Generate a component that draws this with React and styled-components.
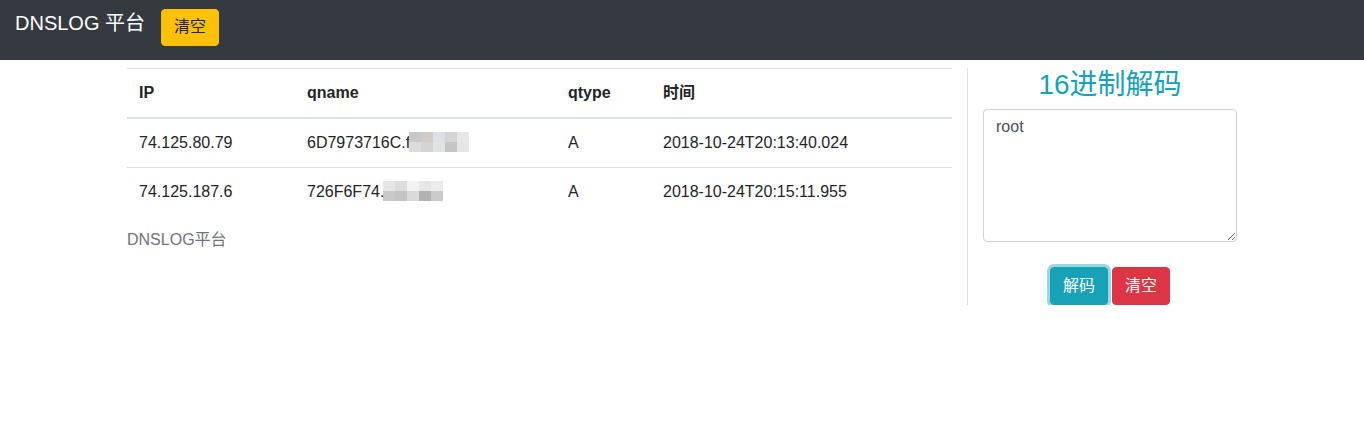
import React from 'react';
import styled, { createGlobalStyle } from 'styled-components';

const GlobalStyle = createGlobalStyle`
  * { box-sizing: border-box; }
  body {
    margin: 0;
    font-family: "Liberation Sans", "Noto Sans CJK SC", sans-serif;
    font-size: 16px;
    line-height: 1.5;
    color: #212529;
    background: #fff;
  }
`;

const Navbar = styled.nav`
  height: 60px;
  background-color: #343a40;
  display: flex;
  align-items: flex-start;
  padding: 8px 16px 0 15px;
`;

const Brand = styled.span`
  font-size: 20px;
  line-height: 30px;
  color: #fff;
  margin-right: 16px;
`;

const Button = styled.button`
  font-family: inherit;
  font-size: 16px;
  line-height: 24px;
  padding: 6px 12px;
  border-radius: 4px;
  border: 1px solid ${p => p.$bg};
  background-color: ${p => p.$bg};
  color: ${p => p.$color || '#fff'};
  cursor: pointer;
  box-shadow: ${p => (p.$focus ? '0 0 0 3px rgba(58, 176, 195, 0.5)' : 'none')};
`;

const NavButton = styled(Button)`
  margin-top: 1px;
  height: 37px;
  padding-top: 5px;
`;

const Container = styled.div`
  width: 1140px;
  margin: 0 auto;
  padding-top: 8px;
  display: grid;
  grid-template-columns: 855px 285px;
`;

const MainCol = styled.div`
  padding: 0 15px;
`;

const SideCol = styled.div`
  border-left: 1px solid #dee2e6;
  padding: 0 15px 0 15px;
  height: 237px;
  display: flex;
  flex-direction: column;
`;

const Table = styled.table`
  width: 100%;
  border-collapse: collapse;
  caption-side: bottom;
`;

const Caption = styled.caption`
  text-align: left;
  color: #6c757d;
  padding: 12px 0;
  line-height: 24px;
`;

const Th = styled.th`
  text-align: left;
  font-weight: bold;
  padding: 12px;
  line-height: 24px;
  border-top: 1px solid #dee2e6;
  border-bottom: 2px solid #dee2e6;
  width: ${p => p.$w}px;
`;

const Td = styled.td`
  padding: 12px;
  line-height: 24px;
  border-top: 1px solid #dee2e6;
  white-space: nowrap;
`;

const Redacted = styled.svg`
  display: inline-block;
  vertical-align: middle;
  margin-left: ${p => p.$offset}px;
  margin-top: -4px;
`;

const Title = styled.h3`
  margin: 0 0 7px;
  font-size: 28px;
  font-weight: 400;
  line-height: 33.6px;
  color: #17a2b8;
  text-align: center;
`;

const TextArea = styled.textarea`
  display: block;
  width: 100%;
  height: 134px;
  padding: 5px 12px 6px;
  font-family: inherit;
  font-size: 16px;
  line-height: 24px;
  color: #495057;
  border: 1px solid #ced4da;
  border-radius: 4px;
  resize: vertical;
`;

const Actions = styled.div`
  display: flex;
  justify-content: center;
  gap: 4px;
  margin-top: 25px;
`;

const rows = [
  {
    ip: '74.125.80.79',
    qname: '6D7973716C.f',
    offset: -1,
    pix: [
      ['#c9c9cc', '#d0ccca', '#dde1e5', '#d4d4d6', '#e6e7e8'],
      ['#dcdcdc', '#d6d4d2', '#e1e3e5', '#c5c5c8', '#e4e5e6'],
    ],
    type: 'A',
    time: '2018-10-24T20:13:40.024',
  },
  {
    ip: '74.125.187.6',
    qname: '726F6F74.',
    offset: -1,
    pix: [
      ['#e6e6e6', '#dcdcdc', '#f2f2f2', '#e6e6e6', '#ececec'],
      ['#c9c9c9', '#c4c4c4', '#dadada', '#b2b2b2', '#cacbcd'],
    ],
    type: 'A',
    time: '2018-10-24T20:15:11.955',
  },
];

function Pixels({ grid, offset }) {
  return (
    <Redacted width="60" height="20" $offset={offset}>
      {grid.map((line, r) =>
        line.map((c, i) => <rect key={r + '-' + i} x={i * 12} y={r * 10} width="12" height="10" fill={c} />)
      )}
    </Redacted>
  );
}

export default function App() {
  return (
    <>
      <GlobalStyle />
      <Navbar>
        <Brand>DNSLOG 平台</Brand>
        <NavButton $bg="#ffc107" $color="#212529">清空</NavButton>
      </Navbar>
      <Container>
        <MainCol>
          <Table>
            <thead>
              <tr>
                <Th $w={168}>IP</Th>
                <Th $w={261}>qname</Th>
                <Th $w={95}>qtype</Th>
                <Th>时间</Th>
              </tr>
            </thead>
            <tbody>
              {rows.map(r => (
                <tr key={r.ip}>
                  <Td>{r.ip}</Td>
                  <Td>
                    {r.qname}
                    <Pixels grid={r.pix} offset={r.offset} />
                  </Td>
                  <Td>{r.type}</Td>
                  <Td>{r.time}</Td>
                </tr>
              ))}
            </tbody>
            <Caption>DNSLOG平台</Caption>
          </Table>
        </MainCol>
        <SideCol>
          <Title>16进制解码</Title>
          <TextArea defaultValue="root" />
          <Actions>
            <Button $bg="#17a2b8" $focus>解码</Button>
            <Button $bg="#dc3545">清空</Button>
          </Actions>
        </SideCol>
      </Container>
    </>
  );
}
